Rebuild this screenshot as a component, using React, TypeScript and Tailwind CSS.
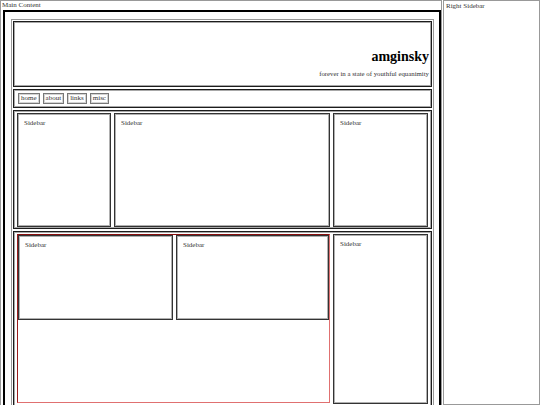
import React from "react";

const box = "border border-[#1c1c1c] shadow-[inset_0_0_0_1px_#a8a8a8]";
const sbox = "border border-[#333] shadow-[inset_0_0_0_1px_#b0b0b0]";

function Sidebar({ className }: { className: string }) {
  return (
    <div className={`${sbox} ${className} pl-[6px] pt-[5px]`}>
      <span>Sidebar</span>
    </div>
  );
}

export default function App() {
  return (
    <div className="flex h-[405px] w-[540px] overflow-hidden bg-white [font-family:'Liberation_Serif','Times_New_Roman',serif] text-[7px] leading-[8px] text-[#333]">
      <div className="h-[440px] w-[442px] shrink-0 border border-[#999]">
        <div className="h-[9px] pl-[1px]">Main Content</div>
        <div className="ml-[2px] h-[440px] border-2 border-black pl-[6px] pr-[5px] pt-[7px]">
          <div className="flex h-[440px] flex-col gap-[2px] border border-[#999] p-[1px]">
            <div className={`${box} flex h-[66px] shrink-0 flex-col items-end justify-end pb-[8px] pr-[2px]`}>
              <div className="text-[14px] font-bold leading-[16px] text-black">amginsky</div>
              <div className="mt-[5px] text-[6.8px] leading-[8px]">forever in a state of youthful equanimity</div>
            </div>
            <div className={`${box} flex h-[19px] shrink-0 items-center gap-[3px] pl-[4px]`}>
              {["home", "about", "links", "misc"].map((t) => (
                <span
                  key={t}
                  className="flex h-[11px] items-center border border-[#777] px-[2px] leading-[9px] shadow-[inset_0_0_0_1px_#d4d4d4]"
                >
                  {t}
                </span>
              ))}
            </div>
            <div className={`${box} flex h-[119px] shrink-0 gap-[3px] px-[3px] pt-[2px]`}>
              <Sidebar className="h-[114px] w-[94px] shrink-0" />
              <Sidebar className="h-[114px] w-[216px] shrink-0" />
              <Sidebar className="h-[114px] w-[95px] shrink-0" />
            </div>
            <div className={`${box} flex h-[200px] shrink-0 gap-[3px] px-[3px] pt-[2px]`}>
              <div className="flex h-[169px] w-[313px] shrink-0 items-start gap-[3px] border border-[#e07070] border-l-[#9a1a1a] border-t-[#8a1010]">
                <Sidebar className="h-[85px] w-[155px] shrink-0" />
                <Sidebar className="h-[85px] w-[153px] shrink-0" />
              </div>
              <Sidebar className="h-[170px] w-[95px] shrink-0" />
            </div>
          </div>
        </div>
      </div>
      <div className="ml-[1px] h-[405px] flex-1 border border-[#999] pl-[2px] pt-[1px]">Right Sidebar</div>
    </div>
  );
}
